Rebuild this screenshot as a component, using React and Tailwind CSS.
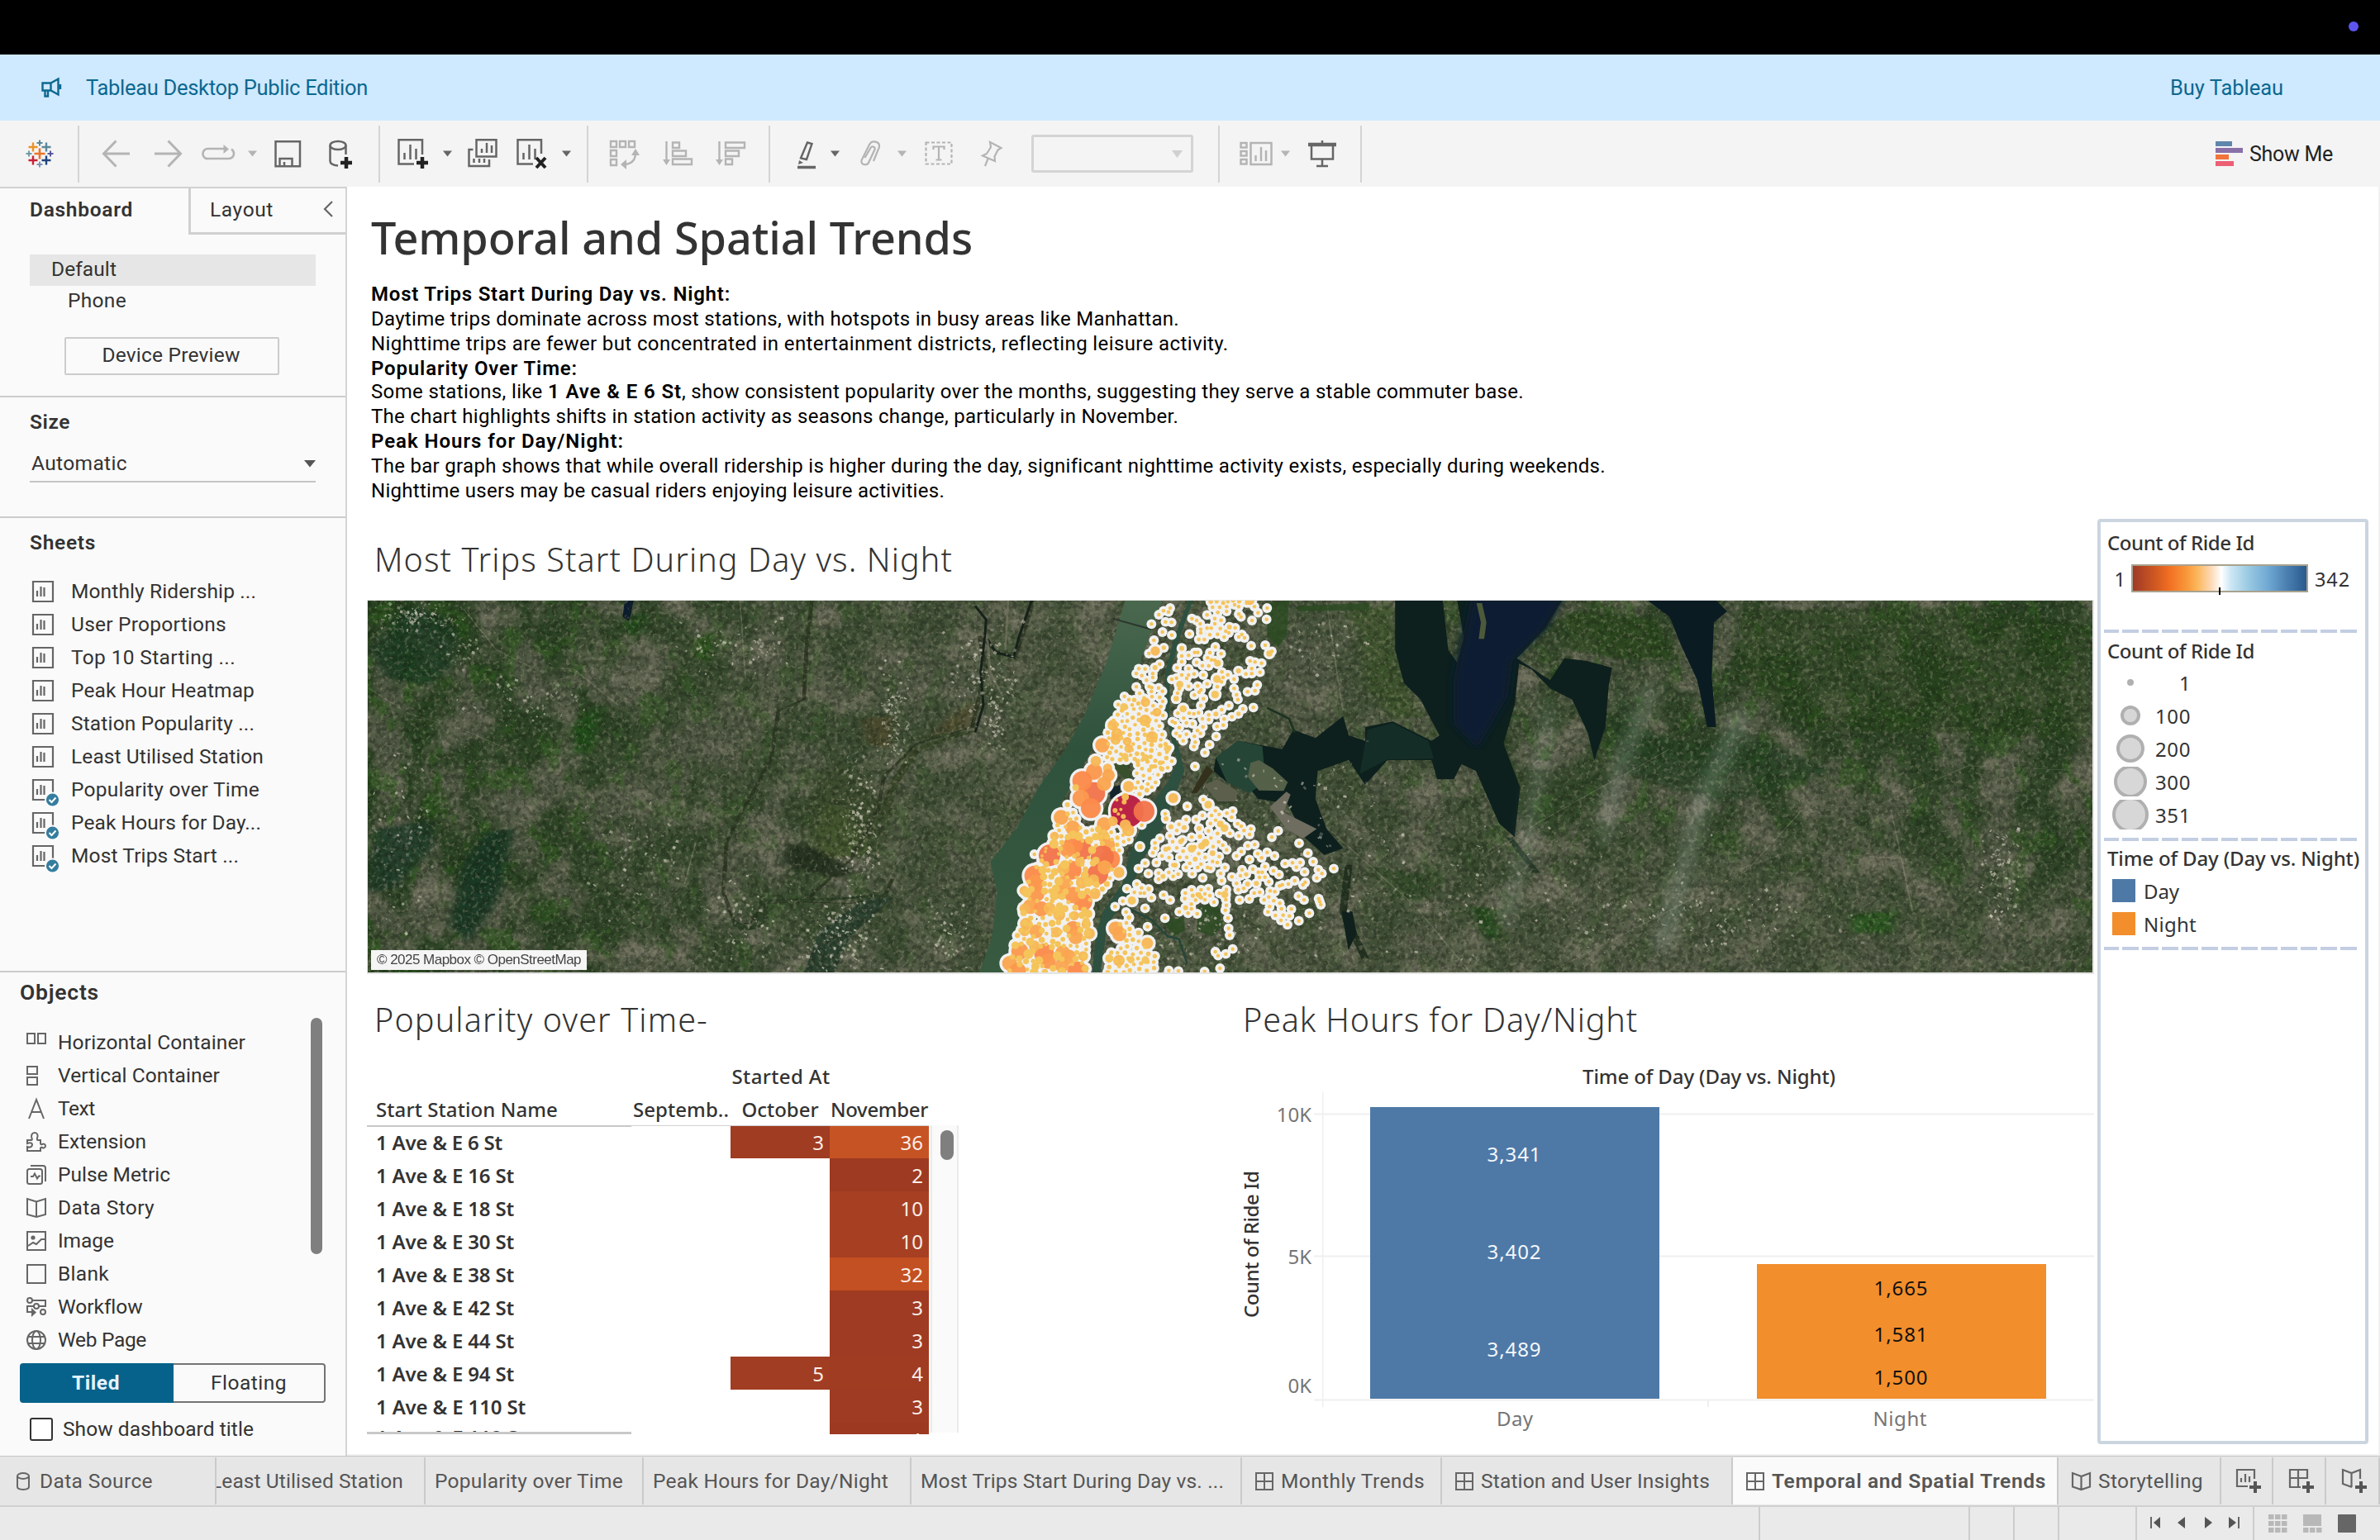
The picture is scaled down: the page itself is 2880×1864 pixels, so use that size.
import React, { useLayoutEffect, useRef } from "react";

/* Single line of text whose tracking is adjusted to fill a given width. */
function T({ w, className = "", children }) {
  const ref = useRef(null);
  useLayoutEffect(() => {
    const el = ref.current;
    if (!w || !el) return;
    el.style.letterSpacing = "0px";
    const natural = el.getBoundingClientRect().width;
    const n = el.textContent.length;
    el.style.letterSpacing = (w - natural) / n + "px";
  }, [w, children]);
  return (
    <span ref={ref} className={"inline-block shrink-0 whitespace-pre " + className}>
      {children}
    </span>
  );
}

function Svg({ w, h = 36, className = "", children, stroke = "#666", sw = 2.5 }) {
  return (
    <svg
      width={w}
      height={h}
      viewBox={`0 0 ${w} ${h}`}
      fill="none"
      stroke={stroke}
      strokeWidth={sw}
      className={"block shrink-0 overflow-visible " + className}
    >
      {children}
    </svg>
  );
}

const Sep = ({ className }) => <div className={"h-[69px] w-[2px] shrink-0 bg-[#d4d4d4] " + className} />;

const Caret = ({ className, color = "#666" }) => (
  <Svg w={11} h={8} className={className} stroke="none">
    <path d="M0 0.5h11L5.5 7.5z" fill={color} />
  </Svg>
);

const PLUSES = [
  [16, 16, 6.5, "#eb7428", 2.6],
  [8, 8, 5.5, "#eb9228", 2.4],
  [24, 8, 5.5, "#5b879b", 2.4],
  [8, 24, 5.5, "#c72035", 2.4],
  [24, 24, 5.5, "#1f447e", 2.4],
  [16, 3, 3.5, "#5b879b", 2],
  [16, 29, 3.5, "#7b94b5", 2],
  [3, 16, 3.5, "#7199a6", 2],
  [29, 16, 3.5, "#59579b", 2],
];

function Toolbar() {
  const g = "#b4b4b4";
  return (
    <div className="flex h-[80px] items-center bg-[#f4f4f4]">
      <Svg w={32} h={32} className="ml-[32px]">
        {PLUSES.map(([x, y, r, c, s], i) => (
          <path key={i} d={`M${x - r} ${y}h${2 * r}M${x} ${y - r}v${2 * r}`} stroke={c} strokeWidth={s} />
        ))}
      </Svg>
      <Sep className="ml-[30px]" />
      <Svg w={34} className="ml-[27px]" stroke={g} sw={3}>
        <path d="M17.500 2.500L2.500 18l15 15.500M2.500 18H34" />
      </Svg>
      <Svg w={34} className="ml-[30px]" stroke={g} sw={3}>
        <path d="M16.500 2.500L31.500 18l-15 15.500M31.500 18H0" />
      </Svg>
      <Svg w={40} className="ml-[23px]" stroke={g} sw={2.6}>
        <path d="M27 12H8a6 6 0 0 0-6.500 6.500 5.500 5.500 0 0 0 6.500 5.500h25a6 6 0 0 0 6-6c0-3-1.500-4.500-3-5.500" />
        <path d="M26.500 7v11l6.500-5.500z" fill={g} stroke="none" />
      </Svg>
      <Caret className="ml-[16px]" color={g} />
      <Svg w={32} className="ml-[21px]">
        <path d="M1.500 3.200h29.500v30H1.500zM6.500 33V24h15v9M12 33v-5" />
      </Svg>
      <Svg w={28} className="ml-[34px]">
        <ellipse cx="11" cy="8" rx="9.500" ry="5" />
        <path d="M1.500 8v19c0 3.500 4 5 9.500 5.500M20.500 8v11" />
        <path d="M21 22v14M14 29h14" stroke="#222" strokeWidth="4.500" />
      </Svg>
      <Sep className="ml-[32px]" />
      <Svg w={37} className="ml-[21px]">
        <path d="M20 30.500H1.500V1.300h28.500V19M8.500 25v-8M15.500 25V7M22.500 25V12" />
        <path d="M30 22v14M23 29h14" stroke="#222" strokeWidth="4.500" />
      </Svg>
      <Caret className="ml-[18px]" />
      <Svg w={36} className="ml-[19px]">
        <path d="M10.500 1.300H34.500V21.500H10.500zM17 17v-5M23 17V5M29 17V8" />
        <path d="M6.500 13H1.500v20h24.500v-8M7.500 29v-5M14 29v-5M20 29v-5" />
      </Svg>
      <Svg w={37} className="ml-[23px]">
        <path d="M20 30.500H1.500V1.300h28.500V18M8.500 25v-8M15.500 25V7M22.500 25V12" />
        <path d="M24 23l11 12M35 23L24 35" stroke="#222" strokeWidth="4" />
      </Svg>
      <Caret className="ml-[18px]" />
      <Sep className="ml-[19px]" />
      <Svg w={37} className="ml-[25px]" stroke={g} sw={2.4}>
        <path d="M2 3h7v7H2zM13 3h7v7h-7zM24 3h7v7h-7zM2 14h7v7H2zM2 25h7v7H2z" />
        <path d="M32 17c0 8-4 13-12 14" />
        <path d="M27 20l5-8 5 8zM21 25v12l-7-6z" fill={g} stroke="none" />
      </Svg>
      <Svg w={37} className="ml-[28px]" stroke={g} sw={2.4}>
        <path d="M4.500 3v24M12 4.500h8v6.500h-8zM12 14.500h16v6.500H12zM12 24.500h23v6.500H12z" />
        <path d="M0 25h9l-4.500 7z" fill={g} stroke="none" />
      </Svg>
      <Svg w={37} className="ml-[27px]" stroke={g} sw={2.4}>
        <path d="M4.500 3v24M12 4.500h23v6.500H12zM12 14.500h16v6.500H12zM12 24.500h8v6.500h-8z" />
        <path d="M0 25h9l-4.500 7z" fill={g} stroke="none" />
      </Svg>
      <Sep className="ml-[27px]" />
      <Svg w={24} className="ml-[32px]">
        <path d="M13 4.500l5.500 1.500L12 25l-7-1.500z" strokeWidth="2.400" />
        <path d="M3 26l5 3-6 2z" fill="#666" stroke="none" />
        <path d="M1 34.500h22" strokeWidth="3.500" />
      </Svg>
      <Caret className="ml-[17px]" />
      <Svg w={25} className="ml-[25px]" stroke={g} sw={2.2}>
        <path d="M5.500 23l7-12c2-3 6-1 5 2l-7 15c-2 5-10 4-9-2L11 7c3-6 13-4 12 3l-7 17" />
      </Svg>
      <Caret className="ml-[20px]" color={g} />
      <Svg w={34} className="ml-[22px]" stroke={g} sw={2.2}>
        <path d="M1.500 4.500h31v26h-31z" strokeDasharray="4 2.500" />
        <path d="M10.500 13V9.500h13V13M17 9.500V25M13.500 25.500h7" />
      </Svg>
      <Svg w={26} className="ml-[34px]" stroke={g} sw={2.2}>
        <path d="M11 4l13.500 7-4 2.500-4 8 .5 5.500L2 20.500l5-2.500 5-8zM8.500 24L5 33" />
      </Svg>
      <div className="ml-[35px] flex h-[46px] w-[196px] shrink-0 items-center justify-end rounded-[3px] border-[3px] border-[#d4d4d4] pr-[10px]">
        <Svg w={13} h={9} stroke="none">
          <path d="M0 0h13L6.500 9z" fill="#d0d0d0" />
        </Svg>
      </div>
      <Sep className="ml-[30px]" />
      <Svg w={40} className="ml-[24px]" stroke={g} sw={2.5}>
        <path d="M1.500 5h7v5.500h-7zM1.500 15h7v5.500h-7zM1.500 25h7v5.500h-7zM13.500 5H38.500V31H13.500zM19.500 27v-7M26 27V10M32 27V14" />
      </Svg>
      <Caret className="ml-[10px]" color={g} />
      <Svg w={34} className="ml-[22px]">
        <path d="M17 2v4M4 8v16.500h26V8M17 24v8M10 33h14" />
        <path d="M0 7h34" strokeWidth="4.500" />
      </Svg>
      <Sep className="ml-[29px]" />
      <div className="ml-auto flex items-center pr-[57px]">
        <Svg w={33} h={32} stroke="none">
          <rect x="0" y="1" width="20" height="6" fill="#5f86ad" />
          <rect x="0" y="9" width="33" height="6" fill="#8a70a8" />
          <rect x="0" y="17" width="16" height="6" fill="#f0743c" />
          <rect x="0" y="25" width="22" height="6" fill="#ec5f74" />
        </Svg>
        <T w={101} className="ml-[8px] pt-[2px] text-[25px] text-[#222]">Show Me</T>
      </div>
    </div>
  );
}

const SheetIcon = ({ used }) => (
  <Svg w={34} h={34} sw={2.2}>
    <path d="M5 5h24v24H5zM10 23v-7M14.500 23V11M18.500 23V12" stroke="#666" />
    {used && (
      <>
        <circle cx="28.500" cy="29" r="9.500" fill="#fafafa" stroke="none" />
        <circle cx="28.500" cy="29" r="7.600" fill="#357d9f" stroke="none" />
        <path d="M24.500 29l3 3 5-5.500" stroke="#fff" strokeWidth="2" />
      </>
    )}
  </Svg>
);

const SHEETS = [
  ["Monthly Ridership ...", 224],
  ["User Proportions", 188],
  ["Top 10 Starting ...", 199],
  ["Peak Hour Heatmap", 222],
  ["Station Popularity ...", 222],
  ["Least Utilised Station", 233],
  ["Popularity over Time", 228, true],
  ["Peak Hours for Day...", 230, true],
  ["Most Trips Start ...", 203, true],
];

const OBJECTS = [
  ["Horizontal Container", 227, <path key="p" d="M1 1h9v12H1zM14 1h9v12h-9z" />],
  ["Vertical Container", 196, <path key="p" d="M1 1h12v9H1zM1 14h12v9H1z" />],
  ["Text", 45, <path key="p" d="M3 24L12 1l9 23M6 16h12" />],
  [
    "Extension",
    107,
    <path
      key="p"
      d="M1 10h5c1 0 1-1 .5-2C5 4 7 1 10 1s4.500 3 3 6.500c-.5 1.500 0 2.500 1 2.500h3v4c0 1 1 1.500 2 1 2-1 4 0 4 2s-2 3-4 2c-1-.5-2 0-2 1v3H1v-5c3 1.500 6 0 6-2.500S4 13 1 14z"
    />,
  ],
  [
    "Pulse Metric",
    136,
    <g key="p">
      <rect x="1" y="5" width="18" height="18" rx="2.500" />
      <path d="M5 1h15a3 3 0 0 1 3 3v16M5 14h3l2-3.500 3 6 2-3h2" />
    </g>,
  ],
  ["Data Story", 117, <path key="p" d="M12 4.500L1 1v19l11 3 11-3V1zM12 4.500V23" />],
  [
    "Image",
    68,
    <g key="p">
      <path d="M1 1h22v22H1zM2 18l6-4 4 2 6-6h5" />
      <circle cx="8" cy="8" r="2.600" fill="#666" stroke="none" />
    </g>,
  ],
  ["Blank", 62, <path key="p" d="M1 1h22v22H1z" />],
  [
    "Workflow",
    102,
    <g key="p">
      <circle cx="4" cy="4" r="3" />
      <circle cx="12" cy="11" r="3" />
      <circle cx="20" cy="18" r="3" />
      <path d="M7 4h16v7h-8M9 11H1v7h6" />
      <path d="M6 13v11l6-5.500z" fill="#666" stroke="none" />
    </g>,
  ],
  [
    "Web Page",
    107,
    <g key="p">
      <circle cx="12" cy="12" r="11" />
      <ellipse cx="12" cy="12" rx="5" ry="11" />
      <path d="M2 8h20M2 16h20" />
    </g>,
  ],
];

function Sidebar() {
  return (
    <div className="flex h-[1536px] w-[420px] shrink-0 flex-col border-r-2 border-t-2 border-r-[#d4d4d4] border-t-[#d0d0d0] bg-[#fafafa] text-[24.5px] text-[#333]">
      <div className="flex h-[80px]">
        <div className="flex h-[52px] w-[228px] items-center pl-[36px]">
          <T w={125} className="font-semibold">Dashboard</T>
        </div>
        <div className="flex h-[56px] flex-1 items-center justify-between border-b-[3px] border-l-[3px] border-[#d0d0d0] pl-[23px] pr-[15px]">
          <T w={77}>Layout</T>
          <Svg w={12} h={20} sw={2.2} className="-mt-[4px]">
            <path d="M11 1L2 10l9 9" />
          </Svg>
        </div>
      </div>
      <div className="mx-[36px] flex h-[38px] shrink-0 items-center bg-[#e6e6e6] pb-[2px] pl-[26px]">
        <T w={79}>Default</T>
      </div>
      <div className="flex h-[38px] shrink-0 items-center pb-[2px] pl-[82px]">
        <T w={71}>Phone</T>
      </div>
      <div className="ml-[78px] mt-[24px] flex h-[46px] w-[260px] shrink-0 items-center justify-center rounded-[2px] border-2 border-[#ccc] pb-[2px] pr-[2px]">
        <T w={167}>Device Preview</T>
      </div>
      <div className="mt-[25px] flex h-[146px] shrink-0 flex-col border-t-2 border-[#ccc] pt-[11px]">
        <div className="flex h-[38px] items-center pl-[36px]">
          <T w={49} className="font-semibold">Size</T>
        </div>
        <div className="mx-[36px] mt-[10px] flex h-[44px] items-center justify-between border-b-2 border-[#c4c4c4] pl-[2px]">
          <T w={116}>Automatic</T>
          <Svg w={14} h={9} stroke="none">
            <path d="M0 0h14L7 8.500z" fill="#555" />
          </Svg>
        </div>
      </div>
      <div className="flex h-[550px] shrink-0 flex-col border-t-2 border-[#ccc] pt-[10px]">
        <div className="flex h-[40px] items-center pl-[36px]">
          <T w={80} className="font-semibold">Sheets</T>
        </div>
        <div className="mt-[19px]">
          {SHEETS.map(([label, w, used]) => (
            <div key={label} className="flex h-[40px] items-center pl-[35px]">
              <SheetIcon used={used} />
              <T w={w} className="ml-[17px]">{label}</T>
            </div>
          ))}
        </div>
      </div>
      <div className="flex flex-1 flex-col border-t-2 border-[#ccc]">
        <div className="flex h-[46px] items-center pl-[24px] pt-[2px]">
          <T w={96} className="text-[26.500px] font-semibold">Objects</T>
        </div>
        <div className="mt-[9px] flex">
          <div className="mt-[10px] w-[376px]">
            {OBJECTS.map(([label, w, icon]) => (
              <div key={label} className="flex h-[40px] items-center pl-[32px]">
                <Svg w={24} h={24} sw={2}>{icon}</Svg>
                <T w={w} className="ml-[14px]">{label}</T>
              </div>
            ))}
          </div>
          <div className="h-[286px] w-[14px] rounded-full bg-[#7f7f7f]" />
        </div>
        <div className="ml-[24px] mt-[8px] flex h-[48px] w-[370px] shrink-0">
          <div className="flex w-[186px] items-center justify-center rounded-l-[4px] bg-[#06628a] pr-[2px]">
            <T w={58} className="font-bold text-[#e6f3ff]">Tiled</T>
          </div>
          <div className="flex flex-1 items-center justify-center rounded-r-[4px] border-2 border-l-0 border-[#747474]">
            <T w={92}>Floating</T>
          </div>
        </div>
        <div className="ml-[36px] mt-[18px] flex h-[28px] items-center">
          <div className="h-[28px] w-[28px] rounded-[3px] border-2 border-[#333] bg-white" />
          <T w={231} className="ml-[12px]">Show dashboard title</T>
        </div>
      </div>
    </div>
  );
}

/* ---------- Map ---------- */

/* Station marks: x, y, radius in the marks' own coordinate space. */
const BIG = [
  [552, 785, 60, 1], [613, 786, 38], [432, 642, 30], [432, 720, 40], [389, 676, 36], [384, 738, 31], [420, 775, 36],
  [462, 546, 26], [500, 473, 19], [515, 505, 21], [510, 525, 19], [552, 532, 16], [558, 558, 16], [544, 587, 13],
  [618, 390, 17], [660, 426, 16], [540, 407, 14], [617, 456, 21], [642, 516, 21], [698, 558, 13], [618, 591, 13],
  [438, 604, 19], [481, 630, 17], [484, 655, 23], [468, 686, 26], [557, 696, 20], [312, 808, 27], [354, 846, 27],
  [288, 876, 16], [468, 833, 26], [500, 822, 18], [545, 835, 20], [556, 855, 22], [465, 876, 22], [270, 946, 39],
  [385, 925, 39], [358, 905, 35], [335, 925, 28], [482, 908, 26], [490, 960, 36], [462, 952, 42], [445, 1015, 38],
  [470, 990, 26], [216, 1020, 37], [220, 1045, 30], [222, 1085, 30], [178, 1074, 17], [522, 1008, 20], [435, 1085, 20],
  [392, 1115, 33], [352, 1000, 34], [320, 995, 22], [380, 970, 18], [325, 1045, 26], [355, 1090, 30], [388, 1045, 22],
  [200, 1132, 27], [180, 1140, 19], [240, 1140, 28], [270, 1138, 22], [305, 1162, 22], [360, 1165, 17], [310, 1080, 24],
  [222, 1222, 25], [185, 1195, 22], [180, 1222, 18], [295, 1225, 19], [355, 1212, 28], [365, 1242, 27], [403, 1196, 17],
  [415, 1230, 20], [162, 1294, 31], [250, 1302, 36], [265, 1330, 28], [125, 1338, 27], [215, 1275, 20], [318, 1300, 27],
  [340, 1315, 27], [392, 1312, 18], [372, 1368, 37], [155, 1365, 30], [315, 1345, 26], [510, 1212, 26], [524, 1232, 26],
  [625, 1265, 21], [522, 1328, 21], [487, 1320, 15], [618, 1326, 14], [566, 1325, 13], [430, 1035, 20], [438, 965, 14],
  [719, 738, 18], [846, 762, 14], [905, 847, 14], [890, 832, 12], [786, 922, 14], [836, 900, 14], [822, 912, 13],
  [654, 204, 17], [878, 306, 14], [871, 362, 14], [743, 325, 13], [755, 414, 13], [730, 377, 10], [880, 248, 12],
  [956, 276, 9], [923, 117, 9], [1068, 213, 11], [997, 20, 17], [874, 433, 9], [956, 432, 8], [750, 194, 9],
  [569, 1110, 15], [906, 1088, 13], [812, 1090, 10], [764, 1136, 9], [598, 914, 10], [692, 924, 9], [746, 896, 9],
  [799, 959, 9], [862, 938, 10], [726, 982, 9], [711, 842, 9], [759, 845, 9], [813, 848, 9], [693, 813, 9],
  [989, 1050, 9], [1021, 1048, 9], [984, 1015, 8], [682, 1022, 9], [630, 1068, 8], [593, 1227, 9], [685, 192, 8],
  [672, 610, 9], [641, 624, 9], [678, 632, 9], [590, 604, 9], [653, 264, 9], [545, 733, 12], [365, 700, 12], [335, 762, 9],
];

const SMALL = [
  708, 48, 684, 58, 667, 72, 702, 62, 691, 98, 713, 100, 640, 106, 680, 135, 714, 146, 649, 165, 631, 213, 862, 45, 888, 45,
  913, 43, 942, 36, 957, 43, 881, 64, 913, 60, 957, 70, 965, 80, 1014, 43, 1060, 48, 1027, 65, 1058, 89, 1005, 93, 842, 73,
  787, 86, 804, 93, 817, 105, 870, 86, 893, 92, 870, 105, 890, 122, 819, 125, 842, 121, 857, 121, 819, 138, 944, 120, 910, 132,
  921, 138, 852, 145, 880, 143, 904, 154, 778, 142, 812, 162, 832, 162, 957, 153, 968, 144, 978, 156, 1002, 185, 1053, 183,
  1077, 205, 872, 189, 852, 210, 797, 209, 808, 209, 775, 220, 750, 222, 750, 243, 844, 229, 858, 236, 893, 214, 870, 238,
  804, 245, 825, 257, 848, 258, 733, 265, 775, 268, 998, 240, 1016, 244, 1040, 248, 1004, 268, 1034, 281, 1004, 286, 983, 287,
  750, 291, 775, 291, 795, 287, 828, 291, 714, 307, 731, 302, 768, 303, 896, 280, 917, 290, 900, 300, 940, 306, 894, 316,
  842, 323, 808, 331, 775, 332, 820, 345, 813, 353, 796, 364, 879, 334, 741, 341, 735, 357, 829, 377, 819, 402, 940, 340,
  949, 363, 954, 380, 989, 352, 1016, 348, 1024, 327, 1010, 409, 972, 414, 921, 402, 932, 443, 895, 417, 848, 436, 848, 453,
  825, 450, 811, 428, 794, 432, 777, 430, 757, 448, 736, 430, 716, 460, 726, 465, 741, 482, 767, 465, 789, 468, 827, 479,
  807, 493, 818, 503, 796, 514, 767, 506, 743, 513, 730, 503, 755, 530, 799, 535, 794, 551, 875, 514, 851, 544, 834, 573,
  878, 478, 901, 473, 904, 451, 798, 623, 617, 269, 594, 268, 585, 286, 605, 293, 645, 286, 645, 300, 670, 252, 622, 310,
  585, 334, 632, 333, 641, 337, 666, 338, 680, 350, 542, 369, 558, 380, 519, 398, 570, 400, 576, 415, 552, 432, 640, 351,
  642, 370, 670, 372, 681, 387, 646, 403, 600, 412, 594, 433, 634, 454, 682, 438, 657, 457, 770, 768, 690, 795, 740, 833,
  766, 816, 802, 816, 825, 801, 828, 743, 872, 784, 858, 801, 886, 797, 914, 793, 935, 785, 931, 808, 873, 818, 854, 830,
  847, 857, 925, 866, 953, 831, 966, 840, 1001, 850, 976, 856, 957, 875, 996, 870, 1100, 857, 1077, 880, 1176, 902, 1208, 938,
  990, 911, 1015, 907, 966, 932, 949, 948, 1026, 940, 1060, 935, 1087, 948, 1040, 955, 996, 961, 1125, 976, 1152, 973, 1180, 972,
  1166, 989, 1196, 1006, 1227, 969, 1246, 998, 1259, 1012, 1240, 1028, 1302, 994, 1160, 1038, 1198, 1044, 1190, 1053, 1137, 1050,
  1115, 1053, 1105, 1057, 1103, 1016, 1083, 1002, 1052, 987, 1052, 1025, 1066, 1042, 1028, 1007, 1042, 1007, 1032, 1026, 1008, 996,
  969, 998, 963, 1020, 932, 1024, 949, 1048, 955, 1071, 975, 1066, 1071, 1075, 1088, 1078, 1033, 1080, 1013, 1083, 960, 1108,
  995, 1104, 1049, 1108, 1066, 1097, 1084, 1111, 1106, 1120, 1112, 1140, 1148, 1141, 1069, 1132, 1063, 1151, 1090, 1164, 1118, 1163,
  1141, 1166, 1110, 1182, 1134, 1198, 1175, 1184, 1213, 1156, 1174, 1094, 1194, 1108, 1247, 1103, 1251, 1114, 1255, 1125, 707, 875,
  671, 884, 653, 901, 653, 920, 645, 937, 732, 856, 786, 880, 717, 896, 732, 919, 678, 948, 658, 972, 704, 954, 617, 974, 593, 994,
  629, 1012, 755, 931, 743, 953, 768, 953, 812, 940, 835, 953, 779, 975, 820, 978, 766, 990, 808, 990, 788, 1013, 826, 1028,
  844, 990, 855, 993, 862, 968, 879, 972, 886, 950, 913, 926, 899, 909, 884, 897, 864, 914, 856, 883, 907, 990, 891, 1012, 895, 1038,
  703, 1008, 719, 1022, 737, 1014, 666, 1010, 666, 1033, 587, 1050, 551, 1067, 604, 1064, 578, 1080, 600, 1083, 614, 1083, 640, 1100,
  617, 1138, 536, 1112, 508, 1132, 548, 1152, 684, 1090, 708, 1108, 689, 1174, 626, 1205, 763, 1083, 786, 1071, 761, 1103, 820, 1071,
  847, 1067, 834, 1086, 852, 1092, 834, 1107, 867, 1116, 887, 1084, 912, 1070, 910, 1107, 912, 1127, 908, 1145, 918, 1174, 920, 1211,
  924, 1236, 785, 1123, 785, 1140, 741, 1151, 773, 1156, 806, 1158, 935, 1286, 910, 1304, 882, 1310, 872, 1296, 889, 1356, 833, 1368,
  738, 1366, 703, 1364, 558, 889, 605, 836, 714, 604, 699, 628, 664, 653, 655, 681, 627, 687, 641, 699, 611, 656, 215, 942,
];

/* Areas that are densely filled with small stations: outline, count, spacing. */
const DENSE = [
  [[[510, 440], [600, 350], [680, 400], [670, 480], [710, 560], [690, 620], [570, 600], [470, 600], [480, 500]], 90, 19],
  [[[590, 610], [690, 620], [640, 700], [590, 740], [575, 680]], 12, 20],
  [[[300, 800], [350, 780], [400, 860], [440, 850], [560, 860], [510, 960], [480, 1060], [420, 1100], [400, 1371], [120, 1371], [175, 1150], [200, 1000], [280, 900]], 170, 20],
  [[[520, 1180], [560, 1170], [580, 1240], [640, 1290], [660, 1300], [650, 1371], [470, 1371], [490, 1300], [555, 1270]], 42, 20],
  [[[700, 880], [880, 860], [890, 960], [700, 1000]], 16, 28],
  [[[780, 1075], [860, 1070], [850, 1100], [790, 1110]], 8, 16],
  [[[850, 20], [1000, 20], [990, 30], [860, 32]], 10, 16],
];

function inside(px, py, poly) {
  let hit = false;
  for (let i = 0, j = poly.length - 1; i < poly.length; j = i++) {
    const [xi, yi] = poly[i];
    const [xj, yj] = poly[j];
    if (yi > py !== yj > py && px < ((xj - xi) * (py - yi)) / (yj - yi) + xi) hit = !hit;
  }
  return hit;
}

function makeRandom(seed) {
  let s = seed;
  return () => {
    s = (s * 1664525 + 1013904223) % 4294967296;
    return s / 4294967296;
  };
}

function buildMarks() {
  const rnd = makeRandom(42);
  const small = [];
  for (let i = 0; i < SMALL.length; i += 2) small.push([SMALL[i], SMALL[i + 1], 6.8]);
  for (const [poly, count, gap] of DENSE) {
    const xs = poly.map((p) => p[0]);
    const ys = poly.map((p) => p[1]);
    const x0 = Math.min(...xs);
    const x1 = Math.max(...xs);
    const y0 = Math.min(...ys);
    const y1 = Math.max(...ys);
    let made = 0;
    for (let tries = 0; tries < 6000 && made < count; tries++) {
      const x = x0 + rnd() * (x1 - x0);
      const y = y0 + rnd() * (y1 - y0);
      if (!inside(x, y, poly)) continue;
      if (small.some(([a, b]) => (a - x) ** 2 + (b - y) ** 2 < gap * gap)) continue;
      /* keep the large marks readable */
      if (BIG.some(([a, b, r]) => r > 24 && (a - x) ** 2 + (b - y) ** 2 < (r * 0.8) ** 2)) continue;
      small.push([x, y, y > 850 && x < 480 ? 7 + rnd() * rnd() * 14 : 6.500 + rnd() * 2]);
      made++;
    }
  }
  return small;
}

const SMALL_MARKS = buildMarks();

function markColor(r, peak) {
  if (peak) return "#b71c3f";
  if (r >= 38) return "#f1744a";
  if (r >= 33) return "#fb8a4b";
  if (r >= 28) return "#fb984e";
  if (r >= 23) return "#faa650";
  if (r >= 16) return "#f7b755";
  return "#f4c45c";
}

function buildClutter() {
  const rnd = makeRandom(7);
  const clusters = [
    [640, 850, 90, 40, 50], [500, 745, 60, 20, 80], [560, 780, 40, 40, 30], [1040, 1010, 30, 110, 150], [1080, 860, 22, 80, 90],
    [1190, 800, 50, 60, 80], [1200, 860, 30, 60, 60], [900, 1110, 60, 60, 60], [1010, 1130, 60, 50, 120], [1560, 990, 160, 120, 80],
    [2080, 1110, 180, 50, 90], [2420, 1060, 30, 70, 90], [1150, 1130, 30, 80, 60], [1460, 1130, 90, 60, 80], [1600, 780, 60, 50, 30],
    [900, 780, 100, 40, 60], [1800, 1080, 300, 90, 90], [480, 1000, 50, 150, 50], [760, 1050, 80, 100, 60],
  ];
  const out = [];
  for (const [cx, cy, sx, sy, n] of clusters) {
    for (let i = 0; i < n; i++) {
      const x = cx + (rnd() + rnd() - 1) * sx;
      const y = cy + (rnd() + rnd() - 1) * sy;
      out.push([x, y, 1 + rnd() * 3.500, 1 + rnd() * 3, rnd() * 60, 0.25 + rnd() * 0.5]);
    }
  }
  return out;
}

const CLUTTER = buildClutter();

const SOUND =
  "M932 20L975 20L980 200L988 245L994 150L988 20L1083 20L1068 120L1042 230L1072 310L1085 230L1105 240L1128 265L1125 330L1122 480L1112 600L1106 500L1092 380L1072 340L1055 270L1044 250L1040 400L1030 540L1045 700L1040 880L1026 830L1005 640L992 615L985 670L970 670L965 600L925 600L905 690L890 600L862 640L860 740L870 850L885 920L868 945L850 880L835 760L808 740L800 700L780 680L768 640L770 590L790 530L830 560L840 490L860 520L885 440L890 510L905 530L905 480L930 460L965 530L972 510L955 380L940 320L932 200z";

const HUDSON =
  "M545 20L475 250L400 430L330 560L230 700L150 850L55 970L80 1080L60 1250L15 1371L100 1371L150 1250L175 1100L205 970L270 870L310 760L380 640L450 520L500 430L570 330L625 170L680 20z";

function MapView() {
  return (
    <svg width="2087" height="450" viewBox="445 727 2087 450" className="block" preserveAspectRatio="none">
      <defs>
        <filter id="forest" x="0" y="0" width="100%" height="100%" colorInterpolationFilters="sRGB">
          <feTurbulence type="fractalNoise" baseFrequency="0.02 0.014" numOctaves="7" seed="8" />
          <feColorMatrix values="0 0 0 0 0.125  0 0 0 0 0.24  0 0 0 0 0.1  4.5 0 0 0 -1.75" />
        </filter>
        <filter id="lush" x="0" y="0" width="100%" height="100%" colorInterpolationFilters="sRGB">
          <feTurbulence type="fractalNoise" baseFrequency="0.035 0.025" numOctaves="5" seed="31" />
          <feColorMatrix values="0 0 0 0 0.17  0 0 0 0 0.36  0 0 0 0 0.1  0 0 9 0 -5.3" />
        </filter>
        <filter id="grainDark" x="0" y="0" width="100%" height="100%" colorInterpolationFilters="sRGB">
          <feTurbulence type="fractalNoise" baseFrequency="0.16" numOctaves="4" seed="2" />
          <feColorMatrix values="0 0 0 0 0.08  0 0 0 0 0.11  0 0 0 0 0.06  0 4 0 0 -1.7" />
        </filter>
        <filter id="grainLight" x="0" y="0" width="100%" height="100%" colorInterpolationFilters="sRGB">
          <feTurbulence type="fractalNoise" baseFrequency="0.2" numOctaves="4" seed="11" />
          <feColorMatrix values="0 0 0 0 0.66  0 0 0 0 0.64  0 0 0 0 0.55  0 0 6 0 -3.3" />
        </filter>
        <filter id="tone" x="0" y="0" width="100%" height="100%" colorInterpolationFilters="sRGB">
          <feTurbulence type="fractalNoise" baseFrequency="0.02 0.03" numOctaves="6" seed="21" />
          <feColorMatrix values="0 0 0 0 0.5  0 0 0 0 0.49  0 0 0 0 0.42  0 4 0 0 -1.8" />
        </filter>
        <filter id="soft"><feGaussianBlur stdDeviation="4" /></filter>
        <filter id="softer"><feGaussianBlur stdDeviation="9" /></filter>
        <filter id="haze"><feGaussianBlur stdDeviation="40" /></filter>
        <linearGradient id="forestFade" x1="0" x2="1" y1="0" y2="0">
          <stop offset="0" stopColor="#fff" />
          <stop offset="0.1" stopColor="#ddd" />
          <stop offset="0.2" stopColor="#999" />
          <stop offset="0.3" stopColor="#777" />
          <stop offset="0.36" stopColor="#444" />
          <stop offset="0.55" stopColor="#444" />
          <stop offset="0.68" stopColor="#bbb" />
          <stop offset="1" stopColor="#ddd" />
        </linearGradient>
        <mask id="forestMask">
          <rect x="445" y="727" width="2087" height="450" fill="url(#forestFade)" />
          <ellipse cx="2120" cy="1180" rx="430" ry="150" fill="#000" opacity="0.6" filter="url(#haze)" />
        </mask>
        <linearGradient id="hudson" x1="0" x2="0" y1="0" y2="1">
          <stop offset="0" stopColor="#4a684e" />
          <stop offset="0.4" stopColor="#2f523d" />
          <stop offset="1" stopColor="#385a40" />
        </linearGradient>
      </defs>

      <rect x="445" y="727" width="2087" height="450" fill="#4f5843" />
      <rect x="445" y="727" width="2087" height="450" filter="url(#tone)" opacity="0.6" />
      <g mask="url(#forestMask)">
        <rect x="445" y="727" width="2087" height="450" filter="url(#forest)" opacity="0.85" />
        <rect x="445" y="727" width="2087" height="450" filter="url(#lush)" opacity="0.55" />
      </g>

      {/* parks, marshes and reservoirs, in a horizontally compressed space */}
      <g transform="translate(440 720) scale(1.3393 0.33333)">
        <g filter="url(#soft)">
          <path d="M4 200L40 40L70 70L85 130L80 260L60 330L20 300z" fill="#1c3c20" opacity="0.8" />
          <path d="M190 480L215 390L208 540L190 590z" fill="#1c4d1a" opacity="0.9" />
          <path d="M235 100L255 60L250 140L238 150z" fill="#1d4a1a" opacity="0.9" />
          <path d="M300 160L318 130L312 240L300 230z" fill="#2b5a1c" opacity="0.8" />
          <path d="M110 860L135 850L122 1100L95 1260L78 1200L90 980z" fill="#1a3722" opacity="0.9" />
          <path d="M10 850L60 820L65 900L30 1060L4 1080z" fill="#203c2a" opacity="0.85" />
          <path d="M410 660L430 600L460 700L475 780L470 900L455 960L425 930L400 880L400 760z" fill="#3b4a2b" opacity="0.9" />
          <path d="M415 760L440 780L460 930L425 960L405 900z" fill="#45562f" opacity="0.9" />
          <path d="M380 900L410 920L445 1010L425 1030L380 980z" fill="#26301c" opacity="0.9" />
          <path d="M450 450L480 440L475 560L455 540zM530 440L555 380L548 480L510 520z" fill="#4d4a2c" opacity="0.8" />
          <path d="M1130 240L1160 500L1210 540L1240 480L1330 640L1230 760L1130 640z" fill="#203e1d" opacity="0.55" />
          <path d="M1240 60L1450 40L1561 120L1561 520L1300 480L1240 300z" fill="#1f4419" opacity="0.5" />
          <path d="M1085 60L1165 80L1190 240L1130 230L1090 200z" fill="#25451e" opacity="0.75" />
          <path d="M905 980L965 1020L960 1110L925 1100z" fill="#27431d" opacity="0.6" />
          <path d="M1343 1160L1385 1150L1380 1230L1345 1225z" fill="#2c5a1e" opacity="0.85" />
          <path d="M1000 1130L1020 1140L1028 1260L1012 1240z" fill="#204a18" opacity="0.85" />
          <path d="M890 60L925 40L940 320L960 440L930 450L905 330L900 160z" fill="#3c5528" opacity="0.7" />
        </g>
        <g fill="none" stroke="#2e3824" strokeWidth="3.500" opacity="0.85">
          <path d="M405 20L400 200L398 380L375 420L368 600L340 800L328 900L325 1080L335 1190L350 1195L362 1120L400 1115L440 1120L470 1100L478 1030" />
          <path d="M605 20L598 120L588 230L570 200L556 150L562 260L550 480L500 540L470 660L465 780L440 960L400 1110" />
          <path d="M890 980L885 1150L905 1320" strokeWidth="7" stroke="#1d2d1c" />
          <path d="M1035 880L1060 1010" stroke="#1c3020" strokeWidth="6" />
        </g>
        <path d="M336 1190Q350 1240 360 1180L362 1110L420 1105L478 1090" fill="none" stroke="#2f4128" strokeWidth="9" />
        <path d="M500 520L545 500L500 560L480 680L470 800" fill="none" stroke="#3a472a" strokeWidth="8" />
        <path d="M455 1100L478 1100L462 1160L440 1240L425 1371L398 1371L412 1220z" fill="#2d4230" />
        <path d="M236 20L244 20L240 95L234 80z" fill="#0b1c2c" />
        <g fill="none" stroke="#97937f" strokeWidth="1.300" opacity="0.45">
          <path d="M90 50L120 200L150 260L190 270L230 400M5 340L40 430L90 490L130 560M340 20L345 300M300 900L290 1050" />
          <path d="M1561 640L1450 620L1370 760L1300 780L1250 1000L1130 1250L1070 1371M1180 560L1060 830L1010 960" />
          <path d="M830 700L950 1130L1000 1371M870 20L880 300L885 420M1380 780L1400 1160M1240 1000L1290 930L1400 960" />
        </g>
      </g>

      <rect x="445" y="727" width="2087" height="450" filter="url(#grainDark)" opacity="0.34" />
      <rect x="445" y="727" width="2087" height="450" filter="url(#grainLight)" opacity="0.3" />

      <g transform="translate(440 720) scale(1.3393 0.33333)">
        <path d={SOUND} fill="#0d201d" />
        <path d="M1000 20L1083 20L1068 120L1038 240L1034 370L1006 560L985 470L985 300z" fill="#0c1a30" filter="url(#soft)" />
        <path d="M770 590L790 530L812 550L815 680L800 720L780 680z" fill="#254637" />
        <path d="M907 490L930 465L962 530L967 595L925 598L900 650z" fill="#142d26" />
        <path d="M1160 20L1222 20L1232 60L1220 100L1218 300L1222 480L1214 480L1205 310L1190 180L1180 80z" fill="#0b1b22" />
        <path d="M1008 30L1012 100L1010 160" fill="none" stroke="#4c5a3a" strokeWidth="5" />
      </g>

      <g transform="translate(1180 720) scale(0.33333)">
        <path d="M1000 610L1030 600L1080 630L1135 680L1120 712L1030 710L990 660z" fill="#556048" />
        <path d="M830 690L880 670L950 710L950 750L880 750z" fill="#5d5f4d" />
        <path d="M1070 770L1130 715L1145 725L1120 790L1240 850L1190 885L1130 850z" fill="#6f6d60" />
        <path d={HUDSON} fill="url(#hudson)" />
        <path
          d="M775 20L725 150L690 280L692 430L720 560L735 600L700 680L640 760L600 850L560 940L535 1050L470 1140L440 1220L425 1371L455 1371L480 1200L560 1080L610 960L680 850L720 740L760 640L740 560L705 440L708 280L745 150L790 20z"
          fill="#2d5040"
        />
        <path d="M500 85L530 95L640 125" fill="none" stroke="#2a352c" strokeWidth="6" />
        <path d="M0 40L40 90L35 150L20 280L30 400L0 500M45 160L75 210L140 225L160 150L205 20" fill="none" stroke="#16211a" strokeWidth="9" />
        <path d="M45 160L55 280L95 360M120 20L110 200" fill="none" stroke="#7a7864" strokeWidth="8" opacity="0.6" />
        <path d="M500 620L545 600L570 660L530 720L480 760L400 870L430 870L500 780L560 690z" fill="#39502c" />
        <path d="M490 700L530 690L520 740L490 740z" fill="#14242c" />
        <path
          d="M1060 30L1140 20L1130 150L1100 190L1060 150zM1170 40L1430 30L1430 55L1170 60zM810 1130L880 1120L900 1200L860 1240L805 1220z M680 1180L760 1170L760 1220L720 1240z"
          fill="#294a20"
          opacity="0.8"
        />
        <path d="M1060 410L1140 450L1160 500" fill="none" stroke="#1c3320" strokeWidth="8" />
        <path d="M1330 1150L1370 1150L1385 1230L1355 1290z" fill="#10211d" />
        <path d="M560 1140L640 1180L700 1240L740 1250L770 1340" fill="none" stroke="#26463a" strokeWidth="8" />
        <path d="M840 620L785 720L805 720L865 640z" fill="#33301c" />
      </g>

      <g>
        {CLUTTER.map(([x, y, w, h, a, o], i) => (
          <rect key={i} x={x} y={y} width={w} height={h} fill="#cfcabb" opacity={o} transform={`rotate(${a} ${x} ${y})`} />
        ))}
      </g>

      {/* thin cloud streaks */}
      <g stroke="#c4cdc6" fill="none" filter="url(#softer)" opacity="0.3">
        <path d="M1875 850L1850 1010L1820 1120" strokeWidth="12" />
        <path d="M2000 830L1960 930L1940 1020" strokeWidth="14" />
        <path d="M2110 860L2060 970L2010 1150" strokeWidth="18" />
      </g>

      <g transform="translate(1180 720) scale(0.33333)">
        <g fill="#f1f1f1">
          {SMALL_MARKS.map(([x, y, r], i) => (
            <circle key={i} cx={x} cy={y} r={r + 11} />
          ))}
          {BIG.map(([x, y, r], i) => (
            <circle key={i} cx={x} cy={y} r={r + 10} />
          ))}
        </g>
        {BIG.map(([x, y, r, peak], i) => (
          <circle key={i} cx={x} cy={y} r={r} fill={markColor(r, peak)} opacity="0.96" />
        ))}
        {SMALL_MARKS.map(([x, y, r], i) => (
          <circle key={i} cx={x} cy={y} r={r} fill="#f5c45a" />
        ))}
        {[[545, 734, 13], [541, 752, 9], [508, 783, 9], [529, 779, 6], [520, 796, 6], [538, 805, 9], [514, 745, 6], [257, 920, 6], [255, 932, 6], [243, 948, 6], [372, 942, 9]].map(
          ([x, y, r], i) => (
            <circle key={i} cx={x} cy={y} r={r} fill="#f5b955" />
          )
        )}
      </g>
    </svg>
  );
}

/* ---------- Popularity table ---------- */

const ROWS = [
  ["1 Ave & E 6 St", 153, "3", "bg-[#9f3c22]", "36", "bg-[#c65324]"],
  ["1 Ave & E 16 St", 167, "", "", "2", "bg-[#9d3a21]"],
  ["1 Ave & E 18 St", 167, "", "", "10", "bg-[#a74023]"],
  ["1 Ave & E 30 St", 167, "", "", "10", "bg-[#a74023]"],
  ["1 Ave & E 38 St", 167, "", "", "32", "bg-[#c35022]"],
  ["1 Ave & E 42 St", 167, "", "", "3", "bg-[#9f3b22]"],
  ["1 Ave & E 44 St", 167, "", "", "3", "bg-[#9f3b22]"],
  ["1 Ave & E 94 St", 167, "5", "bg-[#a13d23]", "4", "bg-[#a03c22]"],
  ["1 Ave & E 110 St", 181, "", "", "3", "bg-[#9f3b22]"],
  ["1 Ave & E 118 St", 181, "", "", "1", "bg-[#9d3921]"],
];

function Popularity() {
  return (
    <div className="w-[1060px] shrink-0 pl-[24px] pt-[27px] text-[24px] text-[#333]">
      <div className="flex h-[54px] items-center pl-[9px] pt-[3px]">
        <T w={404} className="text-[39.500px] font-[350] leading-none">Popularity over Time-</T>
      </div>
      <div className="mt-[23px] flex h-[40px] w-[680px] items-center justify-end">
        <div className="flex w-[360px] justify-center pl-[2px]">
          <T w={119} className="font-[550]">Started At</T>
        </div>
      </div>
      <div className="flex h-[39px] items-center font-[550]">
        <div className="w-[320px] pl-[11px]"><T w={220}>Start Station Name</T></div>
        <div className="flex w-[120px] justify-center"><T w={116}>Septemb..</T></div>
        <div className="flex w-[120px] justify-center"><T w={93}>October</T></div>
        <div className="flex w-[120px] justify-center"><T w={118}>November</T></div>
      </div>
      <div className="flex h-[374px]">
        <div className="h-[374px] w-[320px] overflow-hidden border-b-[3px] border-t-2 border-[#c8c8c8]">
          <div className="-mt-[2px]">
            {ROWS.map(([name, w], i) => (
              <div key={name} className={"flex h-[40px] items-center pl-[11px] font-semibold " + (i === 9 ? "pb-[5px]" : "pt-[1px]")}>
                <T w={w}>{name}</T>
              </div>
            ))}
          </div>
        </div>
        <div className="h-[374px] w-[360px] overflow-hidden border-t border-[#d0d0d0]">
          <div className="-mt-px">
            {ROWS.map(([name, , oct, octBg, nov, novBg]) => (
              <div key={name} className="flex h-[40px] justify-end text-[#fbeee8]">
                <div className={"flex w-[120px] items-center justify-end pr-[7px] pt-[1px] " + octBg}>{oct}</div>
                <div className={"flex w-[120px] items-center justify-end pr-[7px] pt-[1px] " + novBg}>{nov}</div>
              </div>
            ))}
          </div>
        </div>
        <div className="ml-[2px] h-[372px] w-[34px] border-x-2 border-[#ebebeb] bg-[#fafafa] pl-[10px] pt-[6px]">
          <div className="h-[36px] w-[16px] rounded-full bg-[#7f7f7f]" />
        </div>
      </div>
    </div>
  );
}

/* ---------- Peak hours chart ---------- */

function PeakHours() {
  const labels = [
    [1832, 1406, "3,341", "#f4f7fb"],
    [1832, 1524, "3,402", "#f4f7fb"],
    [1832, 1642, "3,489", "#f4f7fb"],
    [2300, 1568, "1,665", "#111"],
    [2300, 1624, "1,581", "#111"],
    [2300, 1676, "1,500", "#111"],
  ];
  return (
    <div className="w-[1056px] shrink-0 pt-[27px] text-[#333]">
      <div className="flex h-[54px] items-center pl-[24px] pt-[3px]">
        <T w={478} className="text-[39.500px] font-[350] leading-none">Peak Hours for Day/Night</T>
      </div>
      <div className="mt-[23px] flex h-[39px] items-center pl-[435px]">
        <T w={306} className="text-[24px] font-[550]">Time of Day (Day vs. Night)</T>
      </div>
      <svg width="1056" height="428" viewBox="1480 1322 1056 428" className="block font-['Noto_Sans',sans-serif]" fontSize="24">
        <g fill="#efefef">
          <rect x="1600" y="1322" width="1.500" height="381" />
          <rect x="1590" y="1347.500" width="944" height="2" />
          <rect x="1590" y="1519.500" width="944" height="2" />
          <rect x="1590" y="1693.500" width="944" height="2" />
          <rect x="2066" y="1695" width="2" height="8" />
        </g>
        <rect x="1658" y="1340" width="350" height="353" fill="#4e79a7" />
        <rect x="2126" y="1530" width="350" height="163" fill="#f28e2b" />
        {labels.map(([x, y, t, c]) => (
          <text key={t} x={x} y={y} fill={c} textAnchor="middle" textLength="65">{t}</text>
        ))}
        <g fill="#757575" textAnchor="end">
          <text x="1587" y="1358">10K</text>
          <text x="1587" y="1530">5K</text>
          <text x="1587" y="1686">0K</text>
        </g>
        <g fill="#757575" textAnchor="middle">
          <text x="1833" y="1726" textLength="44">Day</text>
          <text x="2299" y="1726" textLength="65">Night</text>
        </g>
        <text transform="translate(1523 1595) rotate(-90)" fill="#333" fontWeight="500" textLength="178">Count of Ride Id</text>
      </svg>
    </div>
  );
}

/* ---------- Legends ---------- */

const Dashes = () => (
  <svg width="306" height="4" className="ml-[4px] block shrink-0">
    <line x1="0" x2="306" y1="2" y2="2" stroke="#c3cee3" strokeWidth="4" strokeDasharray="20 4" strokeDashoffset="2" />
  </svg>
);

function Legends() {
  return (
    <div className="ml-px mt-[19px] flex h-[1120px] w-[328px] shrink-0 flex-col rounded-[4px] border-4 border-[#cbd5e0] text-[24px] text-[#333]">
      <div className="flex h-[42px] items-center pl-[8px] pt-[7px]">
        <T w={178} className="font-[550]">Count of Ride Id</T>
      </div>
      <div className="mt-[9px] flex h-[37px] items-start">
        <div className="flex h-[34px] w-[37px] items-center justify-end pr-[7px] pt-[4px] text-[23.500px]">1</div>
        <div className="relative h-[34px] w-[214px] border-2 border-[#a9a28e] bg-[linear-gradient(to_right,#9e3a26_0%,#d45b21_14%,#f26f22_21%,#f8983a_31%,#fcb65a_37%,#fdd9b5_45%,#ffffff_51%,#cfe8f5_56%,#9ccbe3_66%,#6fa8d3_78%,#4a7eb0_89%,#2a5a8e_100%)]">
          <div className="absolute -bottom-[5px] left-[104px] h-[9px] w-[2px] bg-black" />
        </div>
        <div className="flex h-[34px] items-center pl-[8px] pt-[4px]"><T w={43} className="text-[23.500px]">342</T></div>
      </div>
      <div className="mt-[42px]"><Dashes /></div>
      <div className="mt-[5px] flex h-[34px] items-center pl-[8px]">
        <T w={178} className="font-[550]">Count of Ride Id</T>
      </div>
      <div className="mt-[1px]">
        {[["1", 3, 14], ["100", 10, 43], ["200", 15, 43], ["300", 18, 43], ["351", 20, 43]].map(([t, r, w]) => (
          <div key={t} className="flex h-[40px] items-center pl-[14px]">
            <svg width="44" height="36" className="-mt-[1px] block overflow-hidden">
              <circle cx="22" cy="18" r={r} fill={r === 3 ? "#b0b0b0" : "#d7d7d7"} stroke="#b0b0b0" strokeWidth={r === 3 ? 2 : 4} />
            </svg>
            <div className="flex w-[51px] justify-end pt-[1px]"><T w={w}>{t}</T></div>
          </div>
        ))}
      </div>
      <div className="mt-[8px]"><Dashes /></div>
      <div className="mt-[3px] flex h-[36px] items-center pl-[8px]">
        <T w={305} className="font-[550]">Time of Day (Day vs. Night)</T>
      </div>
      <div className="mt-[1px]">
        <div className="flex h-[40px] items-center pl-[14px]">
          <div className="h-[28px] w-[28px] bg-[#4e79a7]" />
          <T w={43} className="ml-[10px] pt-[2px]">Day</T>
        </div>
        <div className="flex h-[40px] items-center pl-[14px]">
          <div className="h-[28px] w-[28px] bg-[#f28e2b]" />
          <T w={64} className="ml-[10px] pt-[2px]">Night</T>
        </div>
      </div>
      <div className="mt-[8px]"><Dashes /></div>
    </div>
  );
}

/* ---------- Dashboard canvas ---------- */

function Canvas() {
  const b = "font-semibold";
  return (
    <div className="flex h-[1536px] w-[2460px] shrink-0 flex-col border-b-2 border-r-2 border-[#f1f1f1] bg-white font-['Noto_Sans',sans-serif]">
      <div className="flex h-[115px] shrink-0 items-center pl-[29px] pt-[7px]">
        <T w={728} className="text-[54px] font-medium leading-none text-[#333]">Temporal and Spatial Trends</T>
      </div>
      <div className="flex h-[268px] shrink-0 flex-col pl-[29px] font-['Roboto',sans-serif] text-[24px] leading-[30px] text-black">
        <div className="h-[30px]"><T w={435} className={b}>Most Trips Start During Day vs. Night:</T></div>
        <div className="h-[30px]"><T w={978}>Daytime trips dominate across most stations, with hotspots in busy areas like Manhattan.</T></div>
        <div className="h-[30px]"><T w={1037}>Nighttime trips are fewer but concentrated in entertainment districts, reflecting leisure activity.</T></div>
        <div className="h-[28px]"><T w={250} className={b + " leading-[26px]"}>Popularity Over Time:</T></div>
        <div className="flex h-[30px]">
          <T w={214}>Some stations, like </T>
          <T w={162} className={b}>1 Ave & E 6 St</T>
          <T w={1019}>, show consistent popularity over the months, suggesting they serve a stable commuter base.</T>
        </div>
        <div className="h-[30px]"><T w={977}>The chart highlights shifts in station activity as seasons change, particularly in November.</T></div>
        <div className="h-[30px]"><T w={306} className={b}>Peak Hours for Day/Night:</T></div>
        <div className="h-[30px]"><T w={1493}>The bar graph shows that while overall ridership is higher during the day, significant nighttime activity exists, especially during weekends.</T></div>
        <div className="h-[30px]"><T w={694}>Nighttime users may be casual riders enjoying leisure activities.</T></div>
      </div>
      <div className="flex">
        <div className="w-[2117px] shrink-0">
          <div className="flex h-[117px] items-center pl-[33px] pt-[21px]">
            <T w={700} className="text-[39.500px] font-[350] leading-none text-[#333]">Most Trips Start During Day vs. Night</T>
          </div>
          <div className="relative ml-[24px] h-[453px] w-[2090px] border border-b-2 border-r-2 border-[#e4e4e4]">
            <MapView />
            <div className="absolute bottom-[3px] left-[4px] flex h-[24px] w-[261px] items-center justify-center bg-white/95 font-['Liberation_Sans',Arial,sans-serif] text-[17px] text-[#444]">
              <T w={247}>© 2025 Mapbox © OpenStreetMap</T>
            </div>
          </div>
          <div className="flex">
            <Popularity />
            <PeakHours />
          </div>
        </div>
        <Legends />
      </div>
    </div>
  );
}

/* ---------- Bottom tabs ---------- */

const GridIcon = () => (
  <Svg w={22} h={22} sw={2}>
    <path d="M1 1h20v20H1zM1 11h20M11 1v20" />
  </Svg>
);
const BookIcon = () => (
  <Svg w={23} h={22} sw={2.200}>
    <path d="M11.500 5L1 1v16.500L11.500 21 22 17.500V1zM11.500 5V21" />
  </Svg>
);
const DbIcon = () => (
  <Svg w={16} h={22} sw={2}>
    <ellipse cx="8" cy="4.500" rx="7" ry="3.500" />
    <path d="M1 4.500v13c0 4.500 14 4.500 14 0v-13" />
  </Svg>
);
const Plus = () => <path d="M23 15v14M16 22h14" strokeWidth="4" stroke="#555" />;

function BottomTabs() {
  const tab = "flex h-[57px] shrink-0 items-center overflow-hidden border-r-2 border-[#cacaca] ";
  const t = "pt-[2px] ";
  return (
    <div className="flex h-[62px] items-center border-b-2 border-t border-b-[#d0d0d0] border-t-[#c4c4c4] bg-[#e6e6e6] text-[24.500px] text-[#555]">
      <div className={tab + "w-[262px] pl-[20px]"}>
        <DbIcon />
        <T w={137} className={t + "ml-[12px]"}>Data Source</T>
      </div>
      <div className={tab + "w-[253px]"}><T w={233} className={t + "-ml-[7px]"}>Least Utilised Station</T></div>
      <div className={tab + "w-[264px] pl-[11px]"}><T w={228} className={t}>Popularity over Time</T></div>
      <div className={tab + "w-[324px] pl-[11px]"}><T w={285} className={t}>Peak Hours for Day/Night</T></div>
      <div className={tab + "w-[400px] pl-[11px]"}><T w={367} className={t}>Most Trips Start During Day vs. ...</T></div>
      <div className={tab + "w-[242px] pl-[16px]"}>
        <GridIcon />
        <T w={174} className={t + "ml-[9px]"}>Monthly Trends</T>
      </div>
      <div className={tab + "w-[352px] pl-[16px]"}>
        <GridIcon />
        <T w={277} className={t + "ml-[9px]"}>Station and User Insights</T>
      </div>
      <div className={tab + "w-[394px] bg-[#fafafa] pl-[16px]"}>
        <GridIcon />
        <T w={332} className={t + "ml-[9px] font-semibold"}>Temporal and Spatial Trends</T>
      </div>
      <div className={tab + "w-[197px] pl-[16px]"}>
        <BookIcon />
        <T w={127} className={t + "ml-[9px]"}>Storytelling</T>
      </div>
      <div className={tab + "w-[63px] pl-[18px]"}>
        <Svg w={30} h={29} sw={2.200}>
          <path d="M14 21H1V1h21v11M6 16v-5M11 16V6M16 16V9" />
          <Plus />
        </Svg>
      </div>
      <div className={tab + "w-[64px] pl-[19px]"}>
        <Svg w={30} h={29} sw={2.200}>
          <path d="M14 22H1V1h21v11M1 11h21M11 1v21" />
          <Plus />
        </Svg>
      </div>
      <div className={tab + "w-[65px] pl-[19px]"}>
        <Svg w={30} h={29} sw={2.200}>
          <path d="M12 22L1 18V1l10.500 4L22 1v11M11.500 5v17" />
          <Plus />
        </Svg>
      </div>
    </div>
  );
}

function StatusBar() {
  const s = "h-full shrink-0 border-l-2 border-[#cdcdcd] ";
  const l = "#b8b8b8";
  return (
    <div className="flex h-[40px] bg-[#eaeaea]">
      <div className="w-[2128px] shrink-0" />
      <div className={s + "w-[254px]"} />
      <div className={s + "w-[54px]"} />
      <div className={s + "w-[54px]"} />
      <div className={s + "w-[94px]"} />
      <div className={s + "flex w-[142px] items-center pb-[2px] pl-[16px]"}>
        <Svg w={12} h={14} sw={2}><path d="M1 0v14" /><path d="M12 0v14L4 7z" fill="#555" stroke="none" /></Svg>
        <Svg w={9} h={14} className="ml-[21px]"><path d="M9 0v14L0 7z" fill="#555" stroke="none" /></Svg>
        <Svg w={9} h={14} className="ml-[24px]"><path d="M0 0v14l9-7z" fill="#555" stroke="none" /></Svg>
        <Svg w={13} h={14} sw={2} className="ml-[20px]"><path d="M12 0v14" /><path d="M0 0v14l9-7z" fill="#555" stroke="none" /></Svg>
      </div>
      <div className={s + "flex flex-1 items-center pl-[17px]"}>
        <Svg w={22} h={22} stroke="none">
          {[0, 8, 16].map((y) => [0, 8, 16].map((x) => <rect key={x + "-" + y} x={x} y={y} width="6.500" height="6" fill={l} />))}
        </Svg>
        <Svg w={22} h={22} stroke="none" className="ml-[20px]">
          <rect width="22" height="14" fill={l} />
          {[0, 8, 16].map((x) => <rect key={x} x={x} y="16" width="6.500" height="6" fill={l} />)}
        </Svg>
        <div className="ml-[20px] h-[22px] w-[22px] rounded-[1px] bg-[#666]" />
      </div>
    </div>
  );
}

export default function App() {
  return (
    <div className="flex h-[1864px] w-[2880px] flex-col overflow-hidden bg-white font-['Roboto',sans-serif]">
      <div className="flex h-[66px] shrink-0 justify-end bg-black pr-[26px] pt-[26px]">
        <div className="h-[12px] w-[12px] rounded-full bg-[#5e55f0]" />
      </div>
      <div className="flex h-[80px] shrink-0 items-center bg-[#cfe9ff] text-[25.500px] text-[#0b6890]">
        <Svg w={25} h={24} stroke="#0b6890" sw={2.400} className="ml-[50px]">
          <path d="M1.500 6.500h10L20.500 1.500v19l-9-5h-10zM11.500 6.500v9M4.500 16v6.500h3.500V16M23 8v6" />
        </Svg>
        <T w={341} className="ml-[29px]">Tableau Desktop Public Edition</T>
        <T w={137} className="ml-auto mr-[117px]">Buy Tableau</T>
      </div>
      <Toolbar />
      <div className="flex">
        <Sidebar />
        <Canvas />
      </div>
      <BottomTabs />
      <StatusBar />
    </div>
  );
}
